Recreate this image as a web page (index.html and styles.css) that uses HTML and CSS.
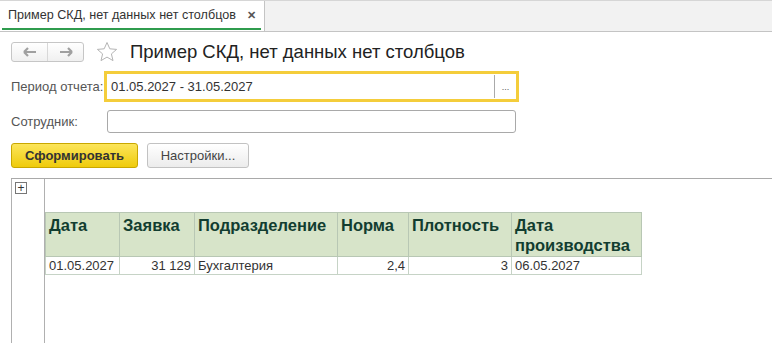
FILE: index.html
```html
<!DOCTYPE html>
<html lang="ru">
<head>
    <meta charset="UTF-8">
    <title>Пример СКД, нет данных нет столбцов</title>
    <link rel="stylesheet" href="styles.css">
</head>
<body>
    <div class="tabbar">
        <div class="tab">
            <span>Пример СКД, нет данных нет столбцов</span>
            <span class="tab-close">✕</span>
        </div>
    </div>

    <div class="form">
        <div class="title-row">
            <div class="nav">
                <span class="nav-btn">
                    <svg width="14" height="10" viewBox="0 0 14 10"><path d="M1 5h12M1 5l4-4M1 5l4 4" stroke="#a0a0a0" stroke-width="2.2" fill="none"/></svg>
                </span>
                <span class="nav-btn">
                    <svg width="14" height="10" viewBox="0 0 14 10"><path d="M1 5h12M13 5l-4-4M13 5l-4 4" stroke="#a0a0a0" stroke-width="2.2" fill="none"/></svg>
                </span>
            </div>
            <svg class="star" width="22" height="22" viewBox="0 0 22 22"><path d="M11 1.5l2.8 6.3 6.8.6-5.2 4.5 1.6 6.7L11 16.1l-6 3.5 1.6-6.7L1.4 8.4l6.8-.6z" fill="none" stroke="#b4b4b4" stroke-width="1"/></svg>
            <h1>Пример СКД, нет данных нет столбцов</h1>
        </div>

        <div class="field-row">
            <label class="field-label">Период отчета:</label>
            <div class="period-input">
                <span class="period-value">01.05.2027 - 31.05.2027</span>
                <span class="period-btn">...</span>
            </div>
        </div>

        <div class="field-row">
            <label class="field-label">Сотрудник:</label>
            <div class="plain-input"></div>
        </div>

        <div class="buttons">
            <button class="btn btn-main">Сформировать</button>
            <button class="btn">Настройки...</button>
        </div>
    </div>

    <div class="sheet">
        <div class="sheet-side">
            <span class="expand">+</span>
        </div>
        <div class="sheet-body">
            <table class="report">
                <tr>
                    <th class="c1">Дата</th>
                    <th class="c2">Заявка</th>
                    <th class="c3">Подразделение</th>
                    <th class="c4">Норма</th>
                    <th class="c5">Плотность</th>
                    <th class="c6">Дата производства</th>
                </tr>
                <tr>
                    <td>01.05.2027</td>
                    <td class="num">31 129</td>
                    <td>Бухгалтерия</td>
                    <td class="num">2,4</td>
                    <td class="num">3</td>
                    <td>06.05.2027</td>
                </tr>
            </table>
        </div>
    </div>
</body>
</html>
```

FILE: styles.css
```css
body {
    margin: 0;
    font-family: "Liberation Sans", Arial, sans-serif;
    font-size: 13px;
    color: #333;
    background: #fff;
    width: 772px;
    height: 343px;
    overflow: hidden;
}
.tabbar {
    height: 32px;
    background: #f2f2f2;
    border-top: 1px solid #d6d6d6;
    border-bottom: 1px solid #c4c4c4;
    box-sizing: border-box;
    display: flex;
}
.tab {
    width: 265px;
    box-sizing: border-box;
    background: #fff;
    border-right: 1px solid #c4c4c4;
    display: flex;
    align-items: center;
    justify-content: space-between;
    padding: 0 8px 2px 8px;
    font-size: 12.6px;
    color: #333;
    position: relative;
}
.tab::after {
    content: "";
    position: absolute;
    left: 2px;
    right: 3px;
    bottom: 1px;
    height: 2px;
    background: #2f9c4e;
}
.tab-close {
    font-size: 11px;
    font-weight: bold;
    color: #555;
}
.form {
    padding: 9px 0 0 11px;
}
.title-row {
    display: flex;
    align-items: center;
    height: 22px;
}
.nav {
    display: flex;
    width: 73px;
    height: 20px;
    box-sizing: border-box;
    border: 1px solid #c6c6c6;
    border-radius: 3px;
    background: linear-gradient(#fff, #f0f0f0);
}
.nav-btn {
    flex: 1;
    display: flex;
    align-items: center;
    justify-content: center;
}
.nav-btn + .nav-btn {
    border-left: 1px solid #d8d8d8;
}
.star {
    margin-left: 12px;
}
h1 {
    margin: 0 0 0 12px;
    font-size: 18.5px;
    font-weight: normal;
    color: #222;
}
.field-row {
    display: flex;
    align-items: center;
    margin-top: 8px;
}
.field-label {
    width: 93px;
    color: #555;
    font-size: 13px;
}
.period-input {
    width: 415px;
    height: 31px;
    box-sizing: border-box;
    border: 3px solid #f4cd3b;
    display: flex;
    align-items: center;
}
.period-value {
    flex: 1;
    padding-left: 4px;
    color: #333;
    font-size: 13px;
}
.period-btn {
    width: 21px;
    height: 23px;
    border-left: 1px solid #aaa;
    display: flex;
    align-items: center;
    justify-content: center;
    font-size: 9px;
    color: #555;
}
.plain-input {
    margin-left: 3px;
    width: 409px;
    height: 23px;
    box-sizing: border-box;
    border: 1px solid #a9a9a9;
    border-radius: 3px;
}
.buttons {
    display: flex;
    gap: 9px;
    margin-top: 10px;
}
.btn {
    height: 25px;
    box-sizing: border-box;
    border: 1px solid #c2c2c2;
    border-radius: 3px;
    background: linear-gradient(#fff, #ececec);
    font-family: "Liberation Sans", Arial, sans-serif;
    font-size: 13px;
    color: #444;
    padding: 0 10px;
    width: 102px;
}
.btn-main {
    width: 127px;
    border-color: #c9a700;
    background: linear-gradient(#fce55a, #efcb0c);
    color: #333;
    font-size: 13px;
    font-weight: bold;
}
.sheet {
    margin: 10px 0 0 11px;
    border-top: 1px solid #a9a9a9;
    display: flex;
    height: 170px;
}
.sheet-side {
    width: 32px;
    border-left: 1px solid #b0b0b0;
    border-right: 1px solid #b0b0b0;
}
.expand {
    display: flex;
    align-items: center;
    justify-content: center;
    width: 10px;
    height: 10px;
    margin: 3px 0 0 3px;
    border: 1px solid #777;
    font-size: 12px;
    line-height: 10px;
    color: #333;
}
.sheet-body {
    padding-top: 33px;
}
.report {
    border-collapse: collapse;
    font-size: 13px;
}
.report th {
    background: #d7e4c9;
    color: #123d30;
    font-size: 16.5px;
    text-align: left;
    vertical-align: top;
    padding: 2px 3px 1px 3px;
    border: 1px solid #b8c7b4;
    height: 44px;
    box-sizing: border-box;
    line-height: 20px;
}
.report td {
    border: 1px solid #c6d3c6;
    padding: 0 3px;
    height: 17px;
    color: #333;
}
.report .num {
    text-align: right;
}
.c1 { width: 74px; }
.c2 { width: 75px; }
.c3 { width: 143px; }
.c4 { width: 71px; }
.c5 { width: 103px; }
.c6 { width: 130px; }
```
